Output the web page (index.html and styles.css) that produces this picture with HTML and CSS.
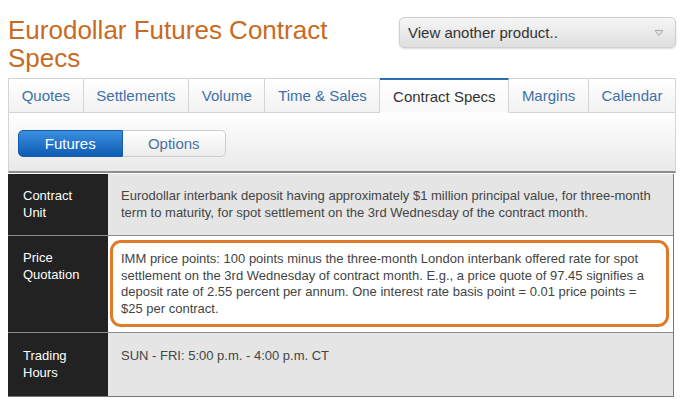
FILE: index.html
```html
<!DOCTYPE html>
<html>
<head>
<meta charset="utf-8">
<link rel="stylesheet" href="styles.css">
</head>
<body>
<div class="page">
  <header class="head">
    <h1 class="title">Eurodollar Futures Contract Specs</h1>
    <div class="select">
      <span>View another product..</span>
      <svg class="caret" width="10" height="8" viewBox="0 0 10 8"><path d="M1 1.5 L9 1.5 L5 6.5 Z" fill="#e4e4e4" stroke="#aaa" stroke-width="1"/></svg>
    </div>
  </header>
  <nav class="tabs">
    <a class="tab">Quotes</a>
    <a class="tab">Settlements</a>
    <a class="tab">Volume</a>
    <a class="tab">Time &amp; Sales</a>
    <a class="tab active">Contract Specs</a>
    <a class="tab">Margins</a>
    <a class="tab last">Calendar</a>
  </nav>
  <div class="panel">
    <div class="seg">
      <span class="seg-btn on">Futures</span>
      <span class="seg-btn">Options</span>
    </div>
  </div>
  <div class="specs">
    <div class="row">
      <div class="label">Contract<br>Unit</div>
      <div class="value">Eurodollar interbank deposit having approximately $1 million principal value, for three-month term to maturity, for spot settlement on the 3rd Wednesday of the contract month.</div>
    </div>
    <div class="row">
      <div class="label">Price<br>Quotation</div>
      <div class="value hl-cell"><div class="hl">IMM price points: 100 points minus the three-month London interbank offered rate for spot settlement on the 3rd Wednesday of contract month. E.g., a price quote of 97.45 signifies a deposit rate of 2.55 percent per annum. One interest rate basis point = 0.01 price points = $25 per contract.</div></div>
    </div>
    <div class="row last-row">
      <div class="label">Trading<br>Hours</div>
      <div class="value">SUN - FRI: 5:00 p.m. - 4:00 p.m. CT</div>
    </div>
  </div>
</div>
</body>
</html>
```
FILE: styles.css
```css
html, body {
  margin: 0;
  padding: 0;
  background: #fff;
}
body {
  font-family: "Liberation Sans", Arial, sans-serif;
  color: #333;
}
.page {
  padding: 0 8px;
  width: 668px;
}
.head {
  display: flex;
  justify-content: space-between;
  align-items: flex-start;
}
.title {
  margin: 16px 0 0 0;
  font-size: 26px;
  line-height: 28px;
  font-weight: normal;
  color: #c96a23;
  width: 340px;
}
.select {
  margin-top: 17px;
  border: 1px solid #cfcfcf;
  border-radius: 5px;
  background: linear-gradient(#f6f6f6, #dedede);
  box-shadow: 0 1px 2px rgba(0,0,0,0.15);
  display: flex;
  align-items: center;
  justify-content: space-between;
  padding: 0 11px 0 8px;
  box-sizing: border-box;
  font-size: 15px;
  color: #333;
  width: 277px;
  height: 31px;
}
.caret { display: block; }
.tabs {
  margin-top: 6px;
  display: flex;
  height: 35px;
  border: 1px solid #d4d4d4;
  border-bottom: none;
  box-sizing: border-box;
  background: linear-gradient(#ffffff, #f1f1f1);
}
.tab {
  flex: 1 1 auto;
  padding: 0 12px;
  font-size: 15px;
  line-height: 33px;
  color: #4170a8;
  text-align: center;
  border-right: 1px solid #d4d4d4;
  border-bottom: 1px solid #d4d4d4;
  white-space: nowrap;
}
.tab.last { border-right: none; }
.tab.active {
  color: #333;
  background: linear-gradient(#ffffff, #f8f8f8);
  border-top: 2px solid #2a6db3;
  margin-top: -1px;
  border-bottom-color: #fcfcfc;
}
.panel {
  height: 60px;
  border-left: 1px solid #d4d4d4;
  border-right: 1px solid #d4d4d4;
  border-bottom: 2px solid #8c8c8c;
  background: linear-gradient(#ffffff, #e9e9e9);
  padding: 17px 0 0 9px;
  box-sizing: border-box;
}
.seg {
  display: flex;
  width: 208px;
  height: 27px;
}
.seg-btn {
  flex: 1;
  font-size: 15px;
  line-height: 25px;
  text-align: center;
  color: #4a72a2;
  border: 1px solid #cccccc;
  border-left: none;
  border-radius: 0 5px 5px 0;
  background: linear-gradient(#ffffff, #ececec);
}
.seg-btn.on {
  color: #fff;
  border: 1px solid #145ca8;
  border-radius: 5px 0 0 5px;
  background: linear-gradient(#3b8fe0, #0f5cb3);
}
.specs {
  width: 665px;
  border-right: 1px solid #777;
  border-bottom: 1px solid #777;
  margin-top: 1px;
}
.row {
  display: flex;
  border-top: 1px solid #8a8a8a;
}
.row:first-child { border-top: none; }
.label {
  width: 100px;
  flex: none;
  background: #222;
  color: #fff;
  font-size: 13px;
  line-height: 16.5px;
  padding: 14px 0 14px 15px;
  box-sizing: border-box;
}
.value {
  flex: 1;
  background: #e5e5e5;
  color: #444;
  font-size: 13px;
  line-height: 16.5px;
  padding: 14px 10px 14px 13px;
}
.last-row .label,
.last-row .value {
  padding-top: 15px;
  padding-bottom: 15px;
}
.value.hl-cell {
  background: #fff;
  padding: 4px 4px 5px 2px;
}
.hl {
  border: 3px solid #de7a28;
  border-radius: 11px;
  padding: 8px 8px 7px 8px;
}
```
